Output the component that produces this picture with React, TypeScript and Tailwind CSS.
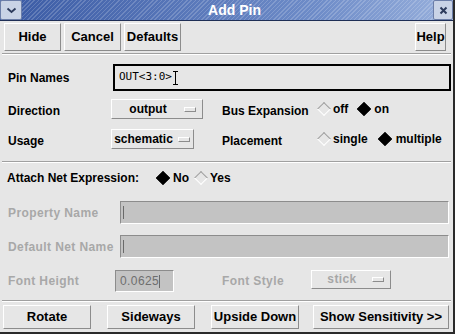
import React from "react";

const raised = "border border-t-white border-l-white border-r-[#8c8c8c] border-b-[#8c8c8c] bg-[#e6e6e6]";
const sunken = "border border-t-[#8c8c8c] border-l-[#8c8c8c] border-r-white border-b-white bg-[#c3c3c3]";

function Btn({ label, className = "" }: { label: string; className?: string }) {
  return (
    <div className={`${raised} flex items-center justify-center font-bold text-[13px] text-black whitespace-nowrap ${className}`}>
      {label}
    </div>
  );
}

function Drop({ label, className = "", disabled = false }: { label: string; className?: string; disabled?: boolean }) {
  return (
    <div className={`${raised} flex items-center justify-between pl-[4px] pr-[6px] whitespace-nowrap ${disabled ? "text-[#a6a6a6]" : "text-black"} ${className}`}>
      <span className="flex-1 text-center">{label}</span>
      <span className="w-[12px] h-[5px] border border-t-white border-l-white border-r-[#8c8c8c] border-b-[#8c8c8c] ml-[4px]" />
    </div>
  );
}

function Diamond({ on }: { on: boolean }) {
  return (
    <span className="inline-flex w-[15px] h-[15px] items-center justify-center">
      <span
        className={`block w-[10px] h-[10px] rotate-45 border ${
          on ? "bg-black border-black" : "bg-[#e6e6e6] border-t-[#a0a0a0] border-l-[#a0a0a0] border-r-white border-b-white"
        }`}
      />
    </span>
  );
}

function Sep() {
  return <div className="mx-[2px] h-[2px] border-t border-t-[#a0a0a0] border-b border-b-white" />;
}

export default function App() {
  return (
    <div className="w-[457px] h-[336px] bg-white overflow-hidden" style={{ fontFamily: '"Liberation Sans", Arial, sans-serif' }}>
      <div className="w-[455px] h-[334px] bg-[#e6e6e6] border-r-2 border-b-2 border-r-[#2a2a2a] border-b-[#2a2a2a] flex flex-col">
        {/* title bar */}
        <div className="h-[21px] flex border-b border-b-[#1e2e55] bg-[image:repeating-linear-gradient(135deg,rgba(255,255,255,0.18)_0px,rgba(255,255,255,0.18)_1px,transparent_1px,transparent_3px),linear-gradient(to_right,#3a5aa4,#6e8cc8_70%,#98b0dc)]">
          <div className="w-[22px] h-[20px] bg-[#c9d3e6] border border-[#6c7ea8] flex items-center justify-center rounded-[2px]">
            <svg width="11" height="7" viewBox="0 0 11 7">
              <path d="M1.5 1.5 L5.5 5 L9.5 1.5" fill="none" stroke="#2d3b5c" strokeWidth="1.8" />
            </svg>
          </div>
          <div className="flex-1 flex items-center justify-center text-white font-bold text-[14px] pl-[14px]">Add Pin</div>
          <div className="w-[20px] h-[20px] bg-[#c9d3e6] border border-[#6c7ea8] flex items-center justify-center rounded-[2px]">
            <svg width="9" height="9" viewBox="0 0 9 9">
              <path d="M1.5 1.5 L7.5 7.5 M7.5 1.5 L1.5 7.5" stroke="#2d3b5c" strokeWidth="2" />
            </svg>
          </div>
        </div>

        {/* toolbar */}
        <div className="flex mt-[2px] pl-[4px] pr-[7px] h-[28px]">
          <Btn label="Hide" className="w-[57px] mr-[3px]" />
          <Btn label="Cancel" className="w-[57px] mr-[3px]" />
          <Btn label="Defaults" className="w-[57px]" />
          <div className="flex-1" />
          <Btn label="Help" className="w-[31px]" />
        </div>
        <div className="mt-[2px]"><Sep /></div>

        {/* pin names */}
        <div className="flex items-center mt-[9px] h-[27px] text-[12px] font-bold whitespace-nowrap">
          <span className="w-[113px] pl-[8px]">Pin Names</span>
          <div className="w-[338px] h-[27px] border-2 border-black bg-[#e6e6e6] flex items-center pl-[4px] text-[11px] font-normal" style={{ fontFamily: '"DejaVu Sans Mono", monospace' }}>
            OUT&lt;3:0&gt;
            <span className="ml-[1px] flex flex-col items-center h-[14px]">
              <span className="w-[5px] h-[1px] bg-black" />
              <span className="w-[1px] flex-1 bg-black" />
              <span className="w-[5px] h-[1px] bg-black" />
            </span>
          </div>
        </div>

        {/* direction */}
        <div className="flex items-center mt-[8px] h-[20px] text-[12px] font-bold whitespace-nowrap">
          <span className="w-[111px] pl-[8px] pt-[3px]">Direction</span>
          <Drop label="output" className="w-[92px] h-[20px] text-[12px]" />
          <span className="ml-[19px] w-[94px] pt-[3px]">Bus Expansion</span>
          <Diamond on={false} />
          <span className="ml-[2px] mr-[8px]">off</span>
          <Diamond on={true} />
          <span className="ml-[3px]">on</span>
        </div>

        {/* usage */}
        <div className="flex items-center mt-[10px] h-[20px] text-[12px] font-bold whitespace-nowrap">
          <span className="w-[111px] pl-[8px] pt-[3px]">Usage</span>
          <Drop label="schematic" className="w-[83px] h-[20px] !pl-[1px] !pr-[3px] text-[12px]" />
          <span className="ml-[28px] w-[94px] pt-[3px]">Placement</span>
          <Diamond on={false} />
          <span className="ml-[2px] mr-[10px]">single</span>
          <Diamond on={true} />
          <span className="ml-[3px]">multiple</span>
        </div>
        <div className="mt-[12px]"><Sep /></div>

        {/* attach net expression */}
        <div className="flex items-center mt-[6px] h-[18px] text-[12px] font-bold whitespace-nowrap">
          <span className="pl-[7px] w-[155px]">Attach Net Expression:</span>
          <Diamond on={true} />
          <span className="ml-[3px] mr-[4px]">No</span>
          <Diamond on={false} />
          <span className="ml-[2px]">Yes</span>
        </div>

        {/* property name */}
        <div className="flex items-center mt-[14px] h-[23px] text-[12px] tracking-[0.4px] font-bold text-[#a8a8a8] whitespace-nowrap">
          <span className="w-[120px] pl-[8px]">Property Name</span>
          <div className={`${sunken} w-[329px] h-[23px] flex items-center pl-[2px]`}>
            <span className="w-[1px] h-[13px] bg-[#6a6a6a]" />
          </div>
        </div>

        {/* default net name */}
        <div className="flex items-center mt-[11px] h-[23px] text-[12px] tracking-[0.4px] font-bold text-[#a8a8a8] whitespace-nowrap">
          <span className="w-[120px] pl-[8px]">Default Net Name</span>
          <div className={`${sunken} w-[329px] h-[23px] flex items-center pl-[2px]`}>
            <span className="w-[1px] h-[13px] bg-[#6a6a6a]" />
          </div>
        </div>

        {/* font height / style */}
        <div className="flex items-center mt-[12px] h-[22px] text-[12px] tracking-[0.4px] font-bold text-[#a8a8a8] whitespace-nowrap">
          <span className="w-[115px] pl-[8px]">Font Height</span>
          <div className={`${sunken} w-[59px] h-[22px] flex items-center pl-[4px] text-[12px] font-normal text-[#6e6e6e]`}>
            0.0625<span className="w-[1px] h-[13px] bg-[#6a6a6a]" />
          </div>
          <span className="ml-[48px] w-[89px]">Font Style</span>
          <Drop label="stick" disabled className="w-[80px] h-[19px] text-[12px] -mt-[4px]" />
        </div>
        <div className="mt-[8px]"><Sep /></div>

        {/* bottom buttons */}
        <div className="flex mt-[3px] pl-[3px] h-[24px]">
          <Btn label="Rotate" className="w-[88px] mr-[16px]" />
          <Btn label="Sideways" className="w-[88px] mr-[16px]" />
          <Btn label="Upside Down" className="w-[88px] mr-[14px]" />
          <Btn label="Show Sensitivity >>" className="w-[136px]" />
        </div>
      </div>
    </div>
  );
}
